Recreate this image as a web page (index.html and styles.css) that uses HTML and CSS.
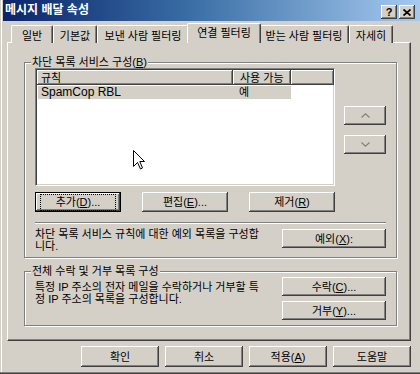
FILE: index.html
```html
<!DOCTYPE html>
<html lang="ko">
<head>
<meta charset="utf-8">
<link rel="stylesheet" href="styles.css">
</head>
<body>
<div class="window">
  <div class="titlebar">
    <span class="title">메시지 배달 속성</span>
    <div class="tb-btns">
      <span class="tb-btn help">?</span>
      <span class="tb-btn close"><svg width="8" height="7" viewBox="0 0 8 7"><path d="M0.5 0.5 L7.5 6.5 M7.5 0.5 L0.5 6.5" stroke="#000" stroke-width="1.7" fill="none"/></svg></span>
    </div>
  </div>
  <div class="main">
    <div class="tabs">
      <div class="tab t1">일반</div>
      <div class="tab t2">기본값</div>
      <div class="tab t3">보낸 사람 필터링</div>
      <div class="tab t4 active">연결 필터링</div>
      <div class="tab t5">받는 사람 필터링</div>
      <div class="tab t6">자세히</div>
    </div>
    <div class="panel">
      <fieldset class="group g1">
        <legend>차단 목록 서비스 구성(<u>B</u>)</legend>
        <div class="list-area">
          <div class="listview">
            <div class="lv-header">
              <div class="hcell c1">규칙</div>
              <div class="hcell c2">사용 가능</div>
              <div class="hcell c3"></div>
            </div>
            <div class="lv-row">
              <span class="cell c1 latin">SpamCop RBL</span>
              <span class="cell c2">예</span>
            </div>
            <svg class="cursor" width="12" height="20" viewBox="0 0 12 20"><path d="M0.5 0.5 L0.5 16.5 L4.5 12.5 L7.5 19 L9.5 18 L6.8 11.5 L11.5 11.5 Z" fill="#fff" stroke="#000" stroke-width="1"/></svg>
          </div>
          <div class="updown">
            <button class="btn arrow"><svg width="9" height="5" viewBox="0 0 9 5"><polyline points="0.5,4.5 4.5,0.8 8.5,4.5" fill="none" stroke="#808080" stroke-width="1.2"/></svg></button>
            <button class="btn arrow"><svg width="9" height="5" viewBox="0 0 9 5"><polyline points="0.5,0.5 4.5,4.2 8.5,0.5" fill="none" stroke="#808080" stroke-width="1.2"/></svg></button>
          </div>
        </div>
        <div class="btn-row">
          <button class="btn default"><span class="focus">추가(<u>D</u>)...</span></button>
          <button class="btn">편집(<u>E</u>)...</button>
          <button class="btn">제거(<u>R</u>)</button>
        </div>
        <div class="sep"></div>
        <div class="desc-row">
          <p class="desc"><span class="ln">차단 목록 서비스 규칙에 대한 예외 목록을 구성합</span><span class="ln">니다.</span></p>
          <button class="btn wide ex">예외(<u>X</u>):</button>
        </div>
      </fieldset>
      <fieldset class="group g2">
        <legend>전체 수락 및 거부 목록 구성</legend>
        <div class="g2-row">
          <p class="desc"><span class="ln">특정 IP 주소의 전자 메일을 수락하거나 거부할 특</span><span class="ln">정 IP 주소의 목록을 구성합니다.</span></p>
          <div class="btn-col">
            <button class="btn wide">수락(<u>C</u>)...</button>
            <button class="btn wide">거부(<u>Y</u>)...</button>
          </div>
        </div>
      </fieldset>
    </div>
    <div class="footer">
      <button class="btn fbtn">확인</button>
      <button class="btn fbtn">취소</button>
      <button class="btn fbtn">적용(<u>A</u>)</button>
      <button class="btn fbtn">도움말</button>
    </div>
  </div>
</div>
</body>
</html>
```

FILE: styles.css
```css
html, body {
  margin: 0;
  padding: 0;
}
body {
  width: 420px;
  height: 374px;
  overflow: hidden;
  background: #d4d0c8;
  font-family: "Liberation Sans", "Noto Sans CJK KR", sans-serif;
  font-size: 11px;
  color: #000;
}
.window {
  width: 420px;
  height: 374px;
  box-sizing: border-box;
  padding-left: 3px;
  box-shadow: inset 0 -1px #404040, inset 0 -2px #808080, inset 1px 0 #d4d0c8, inset 2px 0 #fff;
}
.titlebar {
  height: 21px;
  display: flex;
  justify-content: space-between;
  background: linear-gradient(to right, #0a246a 0%, #3a6ea5 45%, #a6caf0 100%);
}
.title {
  color: #fff;
  font-weight: bold;
  font-size: 12px;
  line-height: 14px;
  padding: 3px 0 0 2px;
}
.tb-btns {
  display: flex;
  gap: 2px;
  padding: 5px 5px 0 0;
}
.tb-btn {
  width: 16px;
  height: 14px;
  box-sizing: border-box;
  background: #d4d0c8;
  box-shadow: inset -1px -1px #404040, inset 1px 1px #fff, inset -2px -2px #808080;
  display: flex;
  align-items: center;
  justify-content: center;
  font-weight: bold;
  font-size: 11px;
  line-height: 11px;
}
.main {
  padding-left: 4px;
}
.tabs {
  display: flex;
  align-items: flex-end;
  height: 22px;
  padding-left: 4px;
}
.tab {
  height: 18px;
  box-sizing: border-box;
  background: #d4d0c8;
  border-left: 1px solid #fff;
  border-top: 1px solid #fff;
  border-right: 1px solid #404040;
  border-radius: 2px 2px 0 0;
  box-shadow: inset -1px 0 #808080;
  text-align: center;
  line-height: 13px;
  padding-top: 4px;
  white-space: nowrap;
}
.t1 { width: 42px; }
.t2 { width: 44px; }
.t3 { width: 92px; }
.t4 { width: 70px; }
.t5 { width: 90px; }
.t6 { width: 44px; }
.tab.active {
  width: 74px;
  height: 20px;
  margin: 0 -2px;
  padding-top: 3px;
  position: relative;
  z-index: 1;
}
.panel {
  margin-top: -1px;
  width: 404px;
  height: 299px;
  box-sizing: border-box;
  border-top: 1px solid #fff;
  border-left: 1px solid #fff;
  border-right: 1px solid #404040;
  border-bottom: 1px solid #404040;
  box-shadow: inset -1px -1px #808080;
  padding-top: 13px;
}
.group {
  margin: 0 13px 0 16px;
  padding: 0 9px 5px 10px;
  border: 1px solid #808080;
  box-shadow: inset 1px 1px #fff, 1px 1px #fff;
  min-width: 0;
}
.group legend {
  padding: 0 1px;
  margin-left: -4px;
  line-height: 12px;
  height: 12px;
  background: #d4d0c8;
}
.g2 {
  margin-top: 7px;
}
.list-area {
  display: flex;
}
.listview {
  position: relative;
  width: 300px;
  height: 118px;
  box-sizing: border-box;
  border: 1px solid;
  border-color: #808080 #fff #fff #808080;
  box-shadow: inset 1px 1px #404040, inset -1px -1px #d4d0c8;
  background: #fff;
  padding: 1px 0 0 1px;
}
.lv-header {
  display: flex;
  height: 15px;
}
.hcell {
  box-sizing: border-box;
  background: #d4d0c8;
  box-shadow: inset -1px -1px #404040, inset 1px 1px #fff, inset -2px -2px #808080;
  line-height: 12px;
  padding: 2px 0 0 4px;
  white-space: nowrap;
}
.hcell.c1 { width: 196px; }
.hcell.c2 { width: 58px; padding-left: 7px; }
.hcell.c3 { flex: 1; }
.lv-row {
  display: flex;
  margin: 1px 0 0 1px;
  height: 13px;
  line-height: 13px;
  background: #d4d0c8;
  width: 253px;
}
.cell.c1 { width: 195px; padding-left: 3px; box-sizing: border-box; }
.cell.c2 { padding-left: 6px; }
.latin {
  font-size: 12px;
}
.cursor {
  position: absolute;
  left: 97px;
  top: 81px;
}
.updown {
  margin-left: 9px;
  padding-top: 38px;
  display: flex;
  flex-direction: column;
  gap: 10px;
}
.btn {
  font: inherit;
  color: #000;
  background: #d4d0c8;
  border: none;
  border-radius: 0;
  margin: 0;
  padding: 0;
  box-sizing: border-box;
  box-shadow: inset -1px -1px #404040, inset 1px 1px #fff, inset -2px -2px #808080;
  display: flex;
  align-items: center;
  justify-content: center;
  line-height: 12px;
  white-space: nowrap;
}
.btn u {
  text-underline-offset: 1px;
}
.arrow {
  width: 42px;
  height: 19px;
}
.btn-row {
  margin-top: 6px;
  width: 300px;
  display: flex;
  justify-content: space-between;
}
.btn-row .btn {
  width: 86px;
  height: 20px;
}
.btn.default {
  box-shadow: inset 0 0 0 1px #000, inset -2px -2px #404040, inset 2px 2px #fff, inset -3px -3px #808080;
}
.focus {
  outline: 1px dotted #000;
  outline-offset: 0;
  padding: 1px 12px 2px;
  width: 74px;
  box-sizing: border-box;
  text-align: center;
}
.sep {
  margin-top: 10px;
  width: 351px;
  border-top: 1px solid #808080;
  border-bottom: 1px solid #fff;
}
.desc-row {
  margin-top: 4px;
  width: 351px;
  display: flex;
  justify-content: space-between;
  align-items: flex-start;
}
.desc {
  margin: 0;
  display: flex;
  flex-direction: column;
  white-space: nowrap;
}
.ln {
  display: block;
  height: 12px;
  line-height: 12px;
}
.wide {
  width: 104px;
  height: 19px;
}
.ex {
  margin-top: 1px;
}
.g2-row {
  width: 351px;
  display: flex;
  justify-content: space-between;
  align-items: flex-start;
}
.g2-row .desc {
  margin-top: 4px;
}
.btn-col {
  display: flex;
  flex-direction: column;
  gap: 5px;
}
.footer {
  width: 404px;
  margin-top: 5px;
  display: flex;
  justify-content: flex-end;
  gap: 6px;
}
.fbtn {
  width: 78px;
  height: 21px;
}
```
